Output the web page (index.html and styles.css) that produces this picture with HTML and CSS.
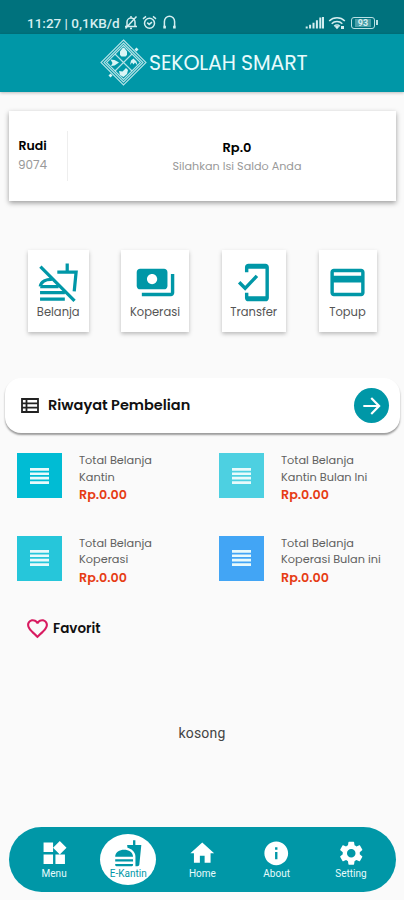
FILE: index.html
```html
<!DOCTYPE html>
<html lang="id">
<head>
<meta charset="utf-8">
<meta name="viewport" content="width=device-width, initial-scale=1">
<title>Sekolah Smart</title>
<link rel="stylesheet" href="styles.css">
</head>
<body>
<div class="status">
  <span class="status-text">11:27 | 0,1KB/d</span>
  <svg class="st-bell" width="14" height="15" viewBox="0 0 14 15"><path d="M3 11V7a4 4 0 0 1 8 0v4M1 11.5h12M6 13.5h2M12.5 1.5 1.5 13.5M7 1v2"/></svg>
  <svg class="st-alarm" width="15" height="15" viewBox="0 0 15 15"><circle cx="7.5" cy="8.2" r="5"/><path d="M1 3.8 4 1.4M14 3.8 11 1.4M5.2 7.6l2 1.8 2.8-2.3"/></svg>
  <svg class="st-head" width="15" height="15" viewBox="0 0 15 15"><path d="M2.4 11V6.400a5.100 5.100 0 0 1 10.200 0V11"/><path class="thick" d="M2.600 10.800v2.800M12.400 10.800v2.800"/></svg>
  <span class="spacer"></span>
  <svg width="19" height="13" viewBox="0 0 19 13"><path class="bars" d="M1.7 12.5v-2M5.1 12.5V8.7M8.5 12.5V6.7M11.9 12.5V4.2M15.3 12.5V1.5M18 12.5V1"/></svg>
  <svg class="st-wifi" width="18" height="14" viewBox="0 0 18 14"><path d="M1.2 5a11 11 0 0 1 15.6 0M3.7 7.7a7.5 7.5 0 0 1 10.6 0M6.2 10.2a4 4 0 0 1 5.6 0"/><path class="fill" d="M6.8 10.8 9 13.2l2.2-2.4a3 3 0 0 0-4.4 0zM13 10h3v3h-3z"/></svg>
  <span class="battery"><span>93</span></span>
</div>
<header class="appbar">
  <svg width="47" height="47" viewBox="0 0 47 47">
    <g class="logo-line"><path d="M23.5 1 46 23.5 23.5 46 1 23.5z"/><path d="M23.5 4 43 23.5 23.5 43 4 23.5z"/><path d="M23.5 6.5 40.5 23.5 23.5 40.5 6.5 23.5z"/><path d="m15 15 17 17M32 15 15 32"/></g>
    <g class="logo-fill"><path d="M20 12.5c1-.8 1.8-3.5 3.5-4 1.700.5 2.500 3.200 3.500 4v3.500l-1.500 1.500h-4L20 16z"/><path d="m10.500 20.500 4 .5 4.500 2.500-4.500 3-3.500.5 1.500-3z"/><path d="m30 26 1-4.500 2.500-2 3 3 1 4-2.500-3-1.500 2-1.500-2z"/><path d="m19 32 3.500.5L26 29l2 2-1 4-3.500 3-3.500-2z"/></g>
    <path class="logo-dot" d="m36.500 8.500 2 2-2 2-2-2zM10.500 34.500l2 2-2 2-2-2z"/>
  </svg>
  <h1>SEKOLAH SMART</h1>
</header>
<main>
  <section class="balance">
    <div class="user"><b>Rudi</b><span>9074</span></div>
    <div class="saldo"><b>Rp.0</b><span>Silahkan Isi Saldo Anda</span></div>
  </section>
  <section class="tiles">
    <div class="tile t1"><svg class="stroked" viewBox="0 0 24 24"><path d="M17.100.9v4.900M11.300 5.900h11l-1.100 11.300M1.300 14.400c.5-3 3.600-4.300 6.800-4.200M1.300 14.400H12M1.200 17.900h14.500M1.200 21.800h14.500M1.400 2.700l20 20"/></svg><span>Belanja</span></div>
    <div class="tile t2"><svg viewBox="0 0 24 24"><path d="M19 14V6c0-1.100-.9-2-2-2H3c-1.100 0-2 .9-2 2v8c0 1.100.9 2 2 2h14c1.100 0 2-.9 2-2zm-9-1c-1.660 0-3-1.340-3-3s1.340-3 3-3 3 1.340 3 3-1.340 3-3 3zm13-6v11c0 1.100-.9 2-2 2H4v-2h17V7h2z"/></svg><span>Koperasi</span></div>
    <div class="tile t3"><svg viewBox="0 0 24 24"><path d="M19 1H9c-1.100 0-2 .9-2 2v3h2V4h10v16H9v-2H7v3c0 1.100.9 2 2 2h10c1.100 0 2-.9 2-2V3c0-1.100-.9-2-2-2z"/><path class="check" d="m3.600 11.900 3.500 3.500 6.900-7.300"/></svg><span>Transfer</span></div>
    <div class="tile t4"><svg viewBox="0 0 24 24"><path d="M20 4H4c-1.110 0-2 .89-2 2v12c0 1.110.89 2 2 2h16c1.110 0 2-.89 2-2V6c0-1.110-.89-2-2-2zm0 14H4v-6h16v6zm0-10H4V6h16v2z"/></svg><span>Topup</span></div>
  </section>
  <section class="history">
    <svg width="18" height="15" viewBox="0 0 18 15"><path d="M1 1h16v13H1zM5.500 1v13M1 5.300h16M1 9.700h16"/></svg>
    <h2>Riwayat Pembelian</h2>
    <span class="go"><svg width="26" height="26" viewBox="0 0 24 24"><path d="m12 4-1.410 1.410L16.170 11H4v2h12.170l-5.580 5.590L12 20l8-8z"/></svg></span>
  </section>
  <section class="totals">
    <div class="total"><i class="sq c1"><svg width="19" height="16" viewBox="0 0 19 16"><path d="M0 0h19v2.700H0zM0 4.400h19v2.700H0zM0 8.800h19v2.700H0zM0 13.200h19v2.700H0z"/></svg></i><p><span>Total Belanja</span><span>Kantin</span><b>Rp.0.00</b></p></div>
    <div class="total"><i class="sq c2"><svg width="19" height="16" viewBox="0 0 19 16"><path d="M0 0h19v2.700H0zM0 4.400h19v2.700H0zM0 8.800h19v2.700H0zM0 13.200h19v2.700H0z"/></svg></i><p><span>Total Belanja</span><span>Kantin Bulan Ini</span><b>Rp.0.00</b></p></div>
    <div class="total"><i class="sq c3"><svg width="19" height="16" viewBox="0 0 19 16"><path d="M0 0h19v2.700H0zM0 4.400h19v2.700H0zM0 8.800h19v2.700H0zM0 13.200h19v2.700H0z"/></svg></i><p><span>Total Belanja</span><span>Koperasi</span><b>Rp.0.00</b></p></div>
    <div class="total"><i class="sq c4"><svg width="19" height="16" viewBox="0 0 19 16"><path d="M0 0h19v2.700H0zM0 4.400h19v2.700H0zM0 8.800h19v2.700H0zM0 13.200h19v2.700H0z"/></svg></i><p><span>Total Belanja</span><span>Koperasi Bulan ini</span><b>Rp.0.00</b></p></div>
  </section>
  <section class="fav">
    <svg width="25" height="25" viewBox="0 0 24 24"><path d="M16.500 3c-1.740 0-3.410.81-4.500 2.090C10.910 3.810 9.240 3 7.500 3 4.420 3 2 5.420 2 8.500c0 3.780 3.400 6.860 8.550 11.540L12 21.350l1.450-1.320C18.600 15.360 22 12.280 22 8.500 22 5.420 19.580 3 16.500 3zm-4.400 15.550l-.1.1-.1-.1C7.140 14.240 4 11.390 4 8.500 4 6.500 5.500 5 7.500 5c1.540 0 3.040.99 3.570 2.360h1.870C13.460 5.990 14.960 5 16.500 5c2 0 3.500 1.500 3.500 3.500 0 2.890-3.140 5.740-7.900 10.050z"/></svg>
    <h3>Favorit</h3>
  </section>
  <p class="empty">kosong</p>
</main>
<nav>
  <a><svg viewBox="0 0 24 24"><path d="M13 13v8h8v-8h-8zM3 21h8v-8H3v8zM3 3v8h8V3H3zm13.660-1.310L11 7.340 16.660 13l5.660-5.660-5.660-5.650z"/></svg><span>Menu</span></a>
  <a class="active"><svg viewBox="0 0 24 24"><path d="M18.060 22.990h1.660c.84 0 1.530-.64 1.630-1.460L23 5.050h-5V1h-1.970v4.050h-4.970l.3 2.340c1.710.47 3.310 1.320 4.270 2.260 1.440 1.420 2.430 2.890 2.430 5.290v8.050zM1 21.990V21h15.030v.99c0 .55-.45 1-1.010 1H2.010c-.56 0-1.010-.45-1.010-1zm15.030-7c0-8-15.030-8-15.030 0h15.030zM1.020 17h15v2h-15z"/></svg><span>E-Kantin</span></a>
  <a><svg viewBox="0 0 24 24"><path d="M10 20v-6h4v6h5v-8h3L12 3 2 12h3v8z"/></svg><span>Home</span></a>
  <a><svg viewBox="0 0 24 24"><path d="M12 2C6.480 2 2 6.480 2 12s4.480 10 10 10 10-4.480 10-10S17.520 2 12 2zm1 15h-2v-6h2v6zm0-8h-2V7h2v2z"/></svg><span>About</span></a>
  <a><svg viewBox="0 0 24 24"><path d="M19.140 12.940c.04-.3.060-.61.060-.94 0-.32-.02-.64-.07-.94l2.030-1.580c.18-.14.23-.41.12-.61l-1.920-3.320c-.12-.22-.37-.29-.59-.22l-2.390.96c-.5-.38-1.030-.7-1.620-.94l-.36-2.540c-.04-.24-.24-.41-.48-.41h-3.840c-.24 0-.43.17-.47.41l-.36 2.540c-.59.24-1.130.57-1.620.94l-2.390-.96c-.22-.08-.47 0-.59.22L2.740 8.870c-.12.21-.08.47.12.61l2.030 1.580c-.05.3-.09.63-.09.94s.02.64.07.94l-2.030 1.580c-.18.14-.23.41-.12.61l1.920 3.320c.12.22.37.29.59.22l2.390-.96c.5.38 1.030.7 1.620.94l.36 2.540c.05.24.24.41.48.41h3.840c.24 0 .44-.17.47-.41l.36-2.540c.59-.24 1.130-.56 1.620-.94l2.390.96c.22.08.47 0 .59-.22l1.920-3.320c.12-.22.07-.47-.12-.61l-2.010-1.580zM12 15.600c-1.980 0-3.600-1.620-3.600-3.600s1.620-3.600 3.600-3.600 3.600 1.620 3.600 3.600-1.620 3.600-3.600 3.600z"/></svg><span>Setting</span></a>
</nav>
</body>
</html>
```
FILE: styles.css
```css
* { box-sizing: border-box; }
html, body { height: 100%; }
body {
  margin: 0;
  display: flex;
  flex-direction: column;
  overflow: hidden;
  background: #fafafa;
  font-family: Poppins, Inter, sans-serif;
  white-space: nowrap;
}
h1, h2, h3, p { margin: 0; }
svg { display: block; flex: none; }

.status {
  flex: none;
  height: 34px;
  padding: 11px 27px 0 27px;
  display: flex;
  align-items: center;
  background: #00727d;
  color: #d5eef0;
  font: 500 13.500px/20px Roboto, sans-serif;
}
.status-text { width: 95px; }
.status svg { fill: none; stroke: #d5eef0; stroke-width: 1.5; }
.status .thick { stroke-width: 2.6; }
.status .bars { stroke-width: 2; }
.status .fill { fill: #d5eef0; stroke: none; }
.st-bell { margin-left: 2px; }
.st-alarm { margin-left: 4px; }
.st-head { margin-left: 5px; }
.spacer { flex: 1; }
.st-wifi { margin: 0 5px 0 4px; }
.battery {
  position: relative;
  width: 24px;
  height: 12px;
  margin-right: 2px;
  border: 1.500px solid #b9e0e3;
  border-radius: 3px;
  display: flex;
  align-items: center;
  justify-content: center;
  font-size: 9px;
  font-weight: 700;
}
.battery span { background: #4b9fa7; padding: 0 3px; line-height: 8px; }
.battery::after {
  content: "";
  position: absolute;
  right: -4px;
  top: 2px;
  width: 2px;
  height: 5px;
  background: #b9e0e3;
}

.appbar {
  flex: none;
  height: 58px;
  display: flex;
  align-items: center;
  padding: 0 0 1px 100px;
  gap: 2px;
  background: #0097a7;
  color: #e8fbfc;
  box-shadow: 0 1px 3px rgba(0, 0, 0, .25);
}
.appbar h1 { font-size: 20.500px; font-weight: 400; letter-spacing: -.15px; }
.logo-line { fill: none; stroke: #b5e3e7; stroke-width: 1.100; }
.logo-fill, .logo-dot { fill: #d9f5f6; }

main { flex: 1; display: flex; flex-direction: column; }
.balance {
  height: 90px;
  margin: 19px 8px 0 9px;
  display: flex;
  align-items: center;
  background: #fff;
  box-shadow: 0 2px 5px rgba(0, 0, 0, .38);
  font-size: 12px;
  line-height: 19px;
  text-align: center;
  color: #999;
}
.balance b { display: block; color: #000; font-weight: 600; font-size: 13px; }
.user { width: 59px; height: 50px; padding: 5px 11px 0 0; border-right: 1px solid #eee; }
.balance .user b { font-size: 12.500px; line-height: 20px; }
.user span { display: block; line-height: 17px; }
.saldo { flex: 1; padding: 3px 0 0 10px; font-size: 11.200px; }
.saldo b { line-height: 18px; }

.tiles { display: flex; gap: 32.500px; padding: 49px 0 0 28px; }
.tile {
  height: 82px;
  display: flex;
  flex-direction: column;
  align-items: center;
  padding-top: 12px;
  background: #fff;
  box-shadow: 0 2px 4px rgba(0, 0, 0, .25);
  color: #555;
  font-size: 11.500px;
  line-height: 18px;
}
.tile svg { width: 41px; height: 41px; fill: #0097a7; }
.tile svg.stroked { fill: none; stroke: #0097a7; stroke-width: 1.900; }
.tile .check { fill: none; stroke: #0097a7; stroke-width: 2; }
.t1 { width: 60.500px; }
.t2 { width: 68px; }
.t3 { width: 64.500px; }
.t4 { width: 58px; }

.history {
  height: 55px;
  margin: 46px 4px 0 5px;
  padding: 0 11px 0 16px;
  display: flex;
  align-items: center;
  background: #fff;
  border-radius: 16px;
  box-shadow: 0 2px 2px rgba(0, 0, 0, .38);
}
.history > svg { fill: none; stroke: #222; stroke-width: 1.800; }
.history h2 { flex: 1; margin-left: 9px; font-size: 14.500px; font-weight: 600; color: #111; }
.go {
  width: 35px;
  height: 35px;
  border-radius: 50%;
  background: #0097a7;
  display: grid;
  place-items: center;
}
.go svg { fill: #fff; }

.totals {
  display: grid;
  grid-template-columns: 202px 1fr;
  row-gap: 32px;
  padding: 18px 0 0 17px;
}
.total { display: flex; gap: 17px; height: 50.500px; }
.sq { width: 45px; height: 45px; margin-top: 2px; display: grid; place-items: center; }
.sq svg { fill: #e8fafb; }
.c1 { background: #00bcd4; }
.c2 { background: #4dd0e1; }
.c3 { background: #26c6da; }
.c4 { background: #42a5f5; }
.total p { color: #606060; font-size: 11.300px; line-height: 16.500px; margin-top: 1px; }
.total span, .total b { display: block; }
.total b { color: #e63c14; font-size: 12.700px; font-weight: 600; line-height: 19px; }

.fav { display: flex; align-items: center; gap: 3px; height: 26px; margin: 31px 0 0 25px; }
.fav svg { fill: #d81b60; }
.fav h3 { font-size: 13.500px; font-weight: 600; color: #111; padding-top: 1px; }
.empty {
  margin: 82px 0 0;
  text-align: center;
  color: #444;
  font: 14px/20px Roboto, sans-serif;
  letter-spacing: .2px;
}

nav {
  flex: none;
  height: 65px;
  margin: 0 8px 8px 9px;
  padding: 0 8px;
  display: flex;
  align-items: center;
  border-radius: 33px;
  background: #0097a7;
}
nav a {
  flex: 1;
  height: 51px;
  display: flex;
  flex-direction: column;
  align-items: center;
  padding-top: 5px;
  color: #e8fbfc;
  font: 10px/12px Roboto, sans-serif;
}
nav svg { width: 28.500px; height: 28.500px; fill: #fff; }
nav .active { flex: 0 0 56px; margin: 0 9px; border-radius: 50%; background: #fff; color: #0097a7; }
nav .active svg { fill: #0097a7; }
```
